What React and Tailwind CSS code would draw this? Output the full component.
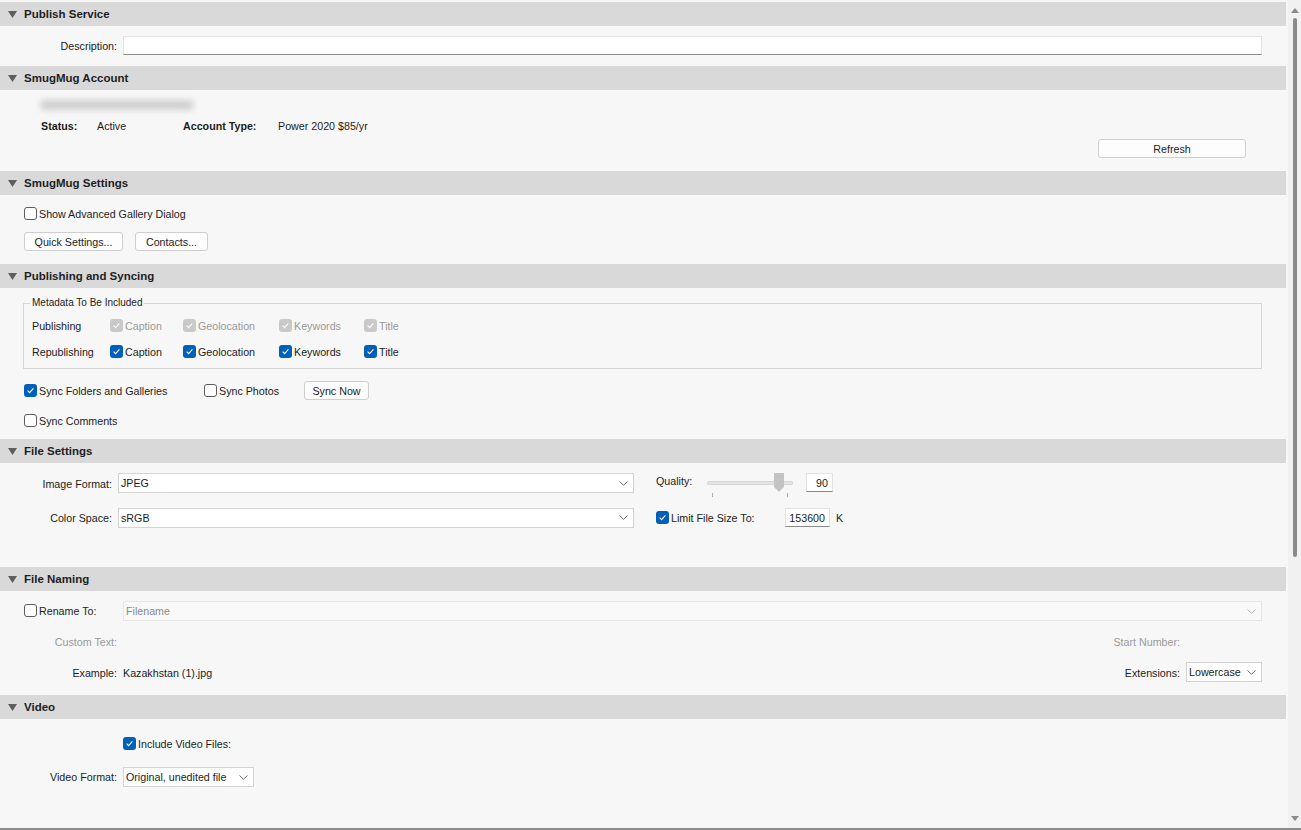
import React from 'react';

function Header({ title }) {
  return (
    <div className="flex h-[24px] shrink-0 items-center bg-[#d9d9d9]">
      <svg className="ml-[8px]" width="9" height="7" viewBox="0 0 9 7">
        <path d="M0 0 H9 L4.5 7 Z" fill="#5e5e5e" />
      </svg>
      <span className="ml-[7px] mt-[1px] text-[11.5px] font-bold text-[#1e1e1e]">{title}</span>
    </div>
  );
}

function Check({ checked, disabled }) {
  if (checked) {
    return (
      <span
        className={`flex h-[13px] w-[13px] shrink-0 items-center justify-center rounded-[3px] ${
          disabled ? 'bg-[#c9c9c9]' : 'bg-[#005fb8]'
        }`}
      >
        <svg width="9" height="9" viewBox="0 0 9 9">
          <path d="M1.6 4.7 L3.6 6.6 L7.4 2.4" fill="none" stroke="#fff" strokeWidth="1.1" />
        </svg>
      </span>
    );
  }
  return <span className="h-[13px] w-[13px] shrink-0 rounded-[3px] border border-[#5c5c5c] bg-white" />;
}

function CheckLabel({ checked, disabled, label, className = '' }) {
  return (
    <div className={`flex items-center gap-[2px] ${className}`}>
      <Check checked={checked} disabled={disabled} />
      <span className={`mt-[1px] ${disabled ? 'text-[#9a9a9a]' : ''}`}>{label}</span>
    </div>
  );
}

function Button({ children, className = '' }) {
  return (
    <div
      className={`flex h-[19px] items-center justify-center rounded-[3px] border border-[#cfcfcf] bg-[#fdfdfd] pt-[1px] ${className}`}
    >
      {children}
    </div>
  );
}

function Chevron({ light }) {
  return (
    <svg width="9" height="5" viewBox="0 0 9 5" className="mr-[5px] shrink-0">
      <path d="M0.5 0.5 L4.5 4.3 L8.5 0.5" fill="none" stroke={light ? '#b5b5b5' : '#6a6a6a'} strokeWidth="1" />
    </svg>
  );
}

function Select({ value, className = '', disabled }) {
  return (
    <div
      className={`flex h-[20px] items-center justify-between border ${
        disabled ? 'border-[#e6e6e6] bg-[#f9f9f9] text-[#8a8a8a]' : 'border-[#d4d4d4] bg-white'
      } ${className}`}
    >
      <span className="mt-[1px] pl-[2px]">{value}</span>
      <Chevron light={disabled} />
    </div>
  );
}

function Slider() {
  return (
    <svg width="90" height="26" viewBox="0 0 90 26" className="mt-[-1px] shrink-0">
      <rect x="2.5" y="9.5" width="85" height="3" rx="1" fill="#e3e3e3" stroke="#d6d6d6" />
      <path d="M69 1 H79 V15 L74 20 L69 15 Z" fill="#c3c3c3" />
      <rect x="7" y="21" width="1" height="4" fill="#b0b0b0" />
      <rect x="82" y="21" width="1" height="4" fill="#b0b0b0" />
    </svg>
  );
}

export default function App() {
  return (
    <div className="flex h-[830px] w-[1301px] flex-col bg-[#f7f7f7] font-['Liberation_Sans',Arial,sans-serif] text-[10.7px] text-[#1c1c1c]">
      <div className="flex min-h-0 flex-1">
        {/* main panel */}
        <div className="flex w-[1286px] flex-col pt-[2px]">
          {/* Publish Service */}
          <Header title="Publish Service" />
          <div className="flex h-[40px] items-start pt-[10px]">
            <span className="w-[117px] pt-[1px] text-right leading-[19px]">Description:</span>
            <div className="ml-[6px] h-[19px] w-[1139px] border border-[#e2e2e2] border-b-[#8a8a8a] bg-white" />
          </div>

          {/* SmugMug Account */}
          <Header title="SmugMug Account" />
          <div className="flex h-[81px] flex-col pt-[10px]">
            <div className="ml-[40px] h-[10px] w-[154px] rounded-full bg-[#cfcfcf] blur-[3px]" />
            <div className="mt-[9px] flex h-[14px] items-center pl-[41px]">
              <span className="w-[56px] font-bold">Status:</span>
              <span className="w-[86px]">Active</span>
              <span className="w-[95px] font-bold">Account Type:</span>
              <span>Power 2020 $85/yr</span>
            </div>
            <Button className="mr-[40px] mt-[6px] w-[148px] self-end">Refresh</Button>
          </div>

          {/* SmugMug Settings */}
          <Header title="SmugMug Settings" />
          <div className="flex h-[69px] flex-col pl-[24px] pt-[12px]">
            <CheckLabel label="Show Advanced Gallery Dialog" className="h-[13px]" />
            <div className="mt-[12px] flex gap-[12px]">
              <Button className="w-[99px]">Quick Settings...</Button>
              <Button className="w-[73px]">Contacts...</Button>
            </div>
          </div>

          {/* Publishing and Syncing */}
          <Header title="Publishing and Syncing" />
          <div className="flex h-[151px] flex-col pt-[9px]">
            <fieldset className="ml-[23px] w-[1239px] border border-[#d6d6d6] pb-[10px] pl-[8px]">
              <legend className="ml-[-2px] px-[2px] text-[10px] leading-[12px]">Metadata To Be Included</legend>
              <div className="mt-[10px] flex h-[13px] items-center">
                <span className="mt-[1px] w-[78px]">Publishing</span>
                <CheckLabel checked disabled label="Caption" className="w-[73px]" />
                <CheckLabel checked disabled label="Geolocation" className="w-[96px]" />
                <CheckLabel checked disabled label="Keywords" className="w-[85px]" />
                <CheckLabel checked disabled label="Title" />
              </div>
              <div className="mt-[13px] flex h-[13px] items-center">
                <span className="mt-[1px] w-[78px]">Republishing</span>
                <CheckLabel checked label="Caption" className="w-[73px]" />
                <CheckLabel checked label="Geolocation" className="w-[96px]" />
                <CheckLabel checked label="Keywords" className="w-[85px]" />
                <CheckLabel checked label="Title" />
              </div>
            </fieldset>
            <div className="mt-[12px] flex h-[19px] items-center pl-[24px]">
              <CheckLabel checked label="Sync Folders and Galleries" className="w-[180px]" />
              <CheckLabel label="Sync Photos" className="w-[100px]" />
              <Button className="w-[65px]">Sync Now</Button>
            </div>
            <CheckLabel label="Sync Comments" className="ml-[24px] mt-[14px] h-[13px]" />
          </div>

          {/* File Settings */}
          <Header title="File Settings" />
          <div className="flex h-[104px] flex-col pt-[10px]">
            <div className="flex items-start">
              <span className="w-[112px] pt-[1px] text-right leading-[20px]">Image Format:</span>
              <Select value="JPEG" className="ml-[6px] w-[516px]" />
              <span className="ml-[22px] mt-[1px] w-[49px] leading-[14px]">Quality:</span>
              <Slider />
              <div className="ml-[11px] flex h-[19px] w-[27px] items-center justify-end border border-[#e2e2e2] border-b-[#8a8a8a] bg-white pr-[4px] pt-[1px]">
                90
              </div>
            </div>
            <div className="mt-[9px] flex items-center">
              <span className="w-[112px] pt-[1px] text-right leading-[20px]">Color Space:</span>
              <Select value="sRGB" className="ml-[6px] w-[516px]" />
              <CheckLabel checked label="Limit File Size To:" className="ml-[22px] w-[129px]" />
              <div className="flex h-[19px] w-[45px] items-center justify-end border border-[#e2e2e2] border-b-[#8a8a8a] bg-white pr-[4px] pt-[1px]">
                153600
              </div>
              <span className="ml-[6px] mt-[1px]">K</span>
            </div>
          </div>

          {/* File Naming */}
          <Header title="File Naming" />
          <div className="flex h-[104px] flex-col pt-[10px]">
            <div className="flex items-center pl-[24px] pr-[24px]">
              <CheckLabel label="Rename To:" className="w-[99px]" />
              <Select value="Filename" disabled className="flex-1" />
            </div>
            <div className="mt-[11px] flex h-[20px] items-center pr-[106px] pt-[1px] text-[#9a9a9a]">
              <span className="w-[117px] text-right">Custom Text:</span>
              <span className="ml-auto">Start Number:</span>
            </div>
            <div className="mt-[10px] flex h-[20px] items-center pr-[24px]">
              <span className="mt-[2px] w-[117px] text-right">Example:</span>
              <span className="ml-[6px] mt-[2px]">Kazakhstan (1).jpg</span>
              <span className="ml-auto mt-[2px]">Extensions:</span>
              <Select value="Lowercase" className="ml-[6px] w-[76px]" />
            </div>
          </div>

          {/* Video */}
          <Header title="Video" />
          <div className="flex flex-1 flex-col pt-[18px]">
            <CheckLabel checked label="Include Video Files:" className="ml-[123px] h-[13px]" />
            <div className="mt-[17px] flex items-center">
              <span className="mt-[1px] w-[117px] text-right">Video Format:</span>
              <Select value="Original, unedited file" className="ml-[6px] w-[131px]" />
            </div>
          </div>
        </div>

        {/* scrollbar */}
        <div className="ml-[2px] flex w-[13px] flex-col items-center bg-[#f1f1f1]">
          <svg width="8" height="5" viewBox="0 0 8 5" className="mt-[8px]">
            <path d="M0 5 L4 0 L8 5 Z" fill="#8a8a8a" />
          </svg>
          <div className="mt-[5px] h-[539px] w-[4px] rounded-full bg-[#8a8a8a]" />
          <div className="flex-1" />
          <svg width="8" height="5" viewBox="0 0 8 5" className="mb-[7px]">
            <path d="M0 0 L8 0 L4 5 Z" fill="#8a8a8a" />
          </svg>
        </div>
      </div>
      <div className="h-[2px] bg-[#8c8c8c]" />
    </div>
  );
}
